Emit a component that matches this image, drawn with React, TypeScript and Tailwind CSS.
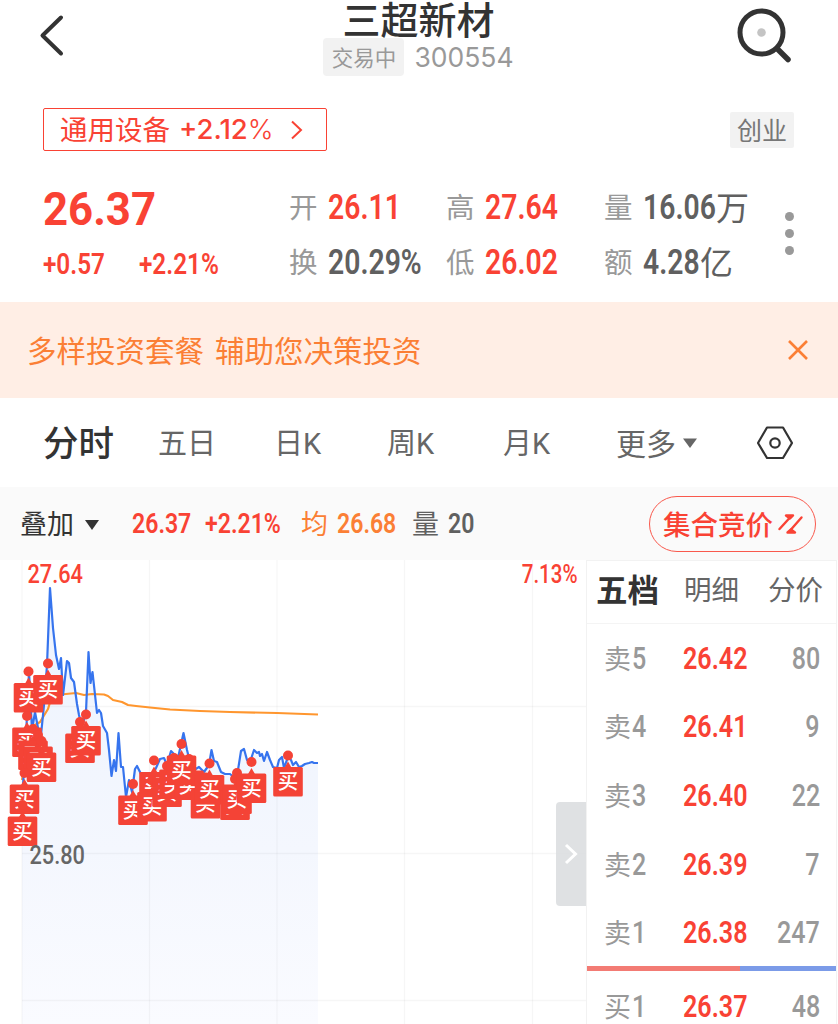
import clsx from 'clsx';
import { twMerge } from 'tailwind-merge';

const PRICE_LINE =
  '22,800 24,770 27,716 29,672 32,730 35,712 38,728 41,735 44,705 47,665 50,588 53,628 56,655 59,669 61,658 63,695 67,661 69,663 71,678 74,682 77,704 79,715 82,727 86,712 88.5,652 90.5,683 92.5,672 97,713 99,710 101,713 103,726 107,733 109,750 111.5,776 114,760 116,771 118.5,733 121,767 123,767 126,797 129,780 132,792 135,769 137,766 140,772 146,784 152,776 156,768 160,759 164,758 167,765 171,751 174,754 178,758 183.5,733 187,750 190,762 194,770 199,767 204,772 209,765 211.5,750 214,761 217,762 221,772 225,774 230,774 235,778 238,770 241,751 244,749 247,760 250,762 254,750 257,753 259,752 260,756 262,754 264,761 267,752 270,760 273,767 277,768 279,760 282,757 284,768 288,757 291,760 293,765 296,762 299,767 302,766 305,764 309,763 312,762 314,763 318,763';

const AVG_LINE =
  '22,780 30,728 40,722 48,709 51,699 57,695 66,694 76,693 84,695 92,694 104,694.5 108,696 113,700 122,702 128,705 136,706 150,707.5 170,709.5 200,711 230,712 277,713 318,714.5';

// trade markers, painted in order so later ones sit on top
const buys = [
  [28.5, 671.5],
  [48, 663.5],
  [27, 716],
  [33, 729],
  [38, 735],
  [41.5, 741],
  [24.5, 773],
  [22.5, 805],
  [80, 722],
  [86, 714.5],
  [133, 784],
  [154, 760.5],
  [152, 780.5],
  [167, 766],
  [174, 758],
  [189, 759],
  [181.5, 744],
  [205.5, 777.5],
  [209.5, 763.5],
  [235, 779],
  [237, 773],
  [251.5, 762],
  [288, 755.5],
];

const tabs = [
  { label: '五日', width: 'w-[116px]' },
  { label: '日K', width: 'w-[113px]' },
  { label: '周K', width: 'w-[116px]' },
  { label: '月K', width: 'w-[112px]' },
];

const asks = [
  { label: '5', price: '26.42', qty: '80' },
  { label: '4', price: '26.41', qty: '9' },
  { label: '3', price: '26.40', qty: '22' },
  { label: '2', price: '26.39', qty: '7' },
  { label: '1', price: '26.38', qty: '247' },
];

// condensed figures: the glyphs are squeezed, the box width comes from className
function Num({ children, className, right }: { children: string; className?: string; right?: boolean }) {
  return (
    <span className={twMerge('flex shrink-0 whitespace-nowrap font-semibold', right && 'justify-end', className)}>
      <span className={clsx('block scale-x-[0.81]', right ? 'origin-right' : 'origin-left')}>{children}</span>
    </span>
  );
}

function Quote({ label, value, unit, width, dark }: { label: string; value: string; unit?: string; width: string; dark?: boolean }) {
  return (
    <div className="flex h-[55px] items-center">
      <span className="w-[39px] pt-[3px] text-[28.5px] text-[#999]">{label}</span>
      <Num className={clsx('text-[35px]', width, dark ? 'text-[#606060]' : 'text-[#f94234]')}>{value}</Num>
      {unit && <span className="pt-[2px] text-[33px] text-[#606060]">{unit}</span>}
    </div>
  );
}

function BookRow({ side, label, price, qty }: { side: string; label: string; price: string; qty: string }) {
  return (
    <div className="flex h-[68.6px] items-center pl-[17px] pr-[16px] text-[31px]">
      <span className="w-[28px] pt-[4px] text-[27px] text-[#999]">{side}</span>
      <Num className="w-[51px] font-medium text-[#999]">{label}</Num>
      <Num className="w-[66px] text-[#f94234]">{price}</Num>
      <Num right className="ml-auto font-medium text-[#999]">{qty}</Num>
    </div>
  );
}

function Chart() {
  return (
    <svg className="block h-[464px] w-[586px]" viewBox="0 560 586 464">
      <defs>
        <linearGradient id="area" x1="0" y1="0" x2="0" y2="1">
          <stop offset="0" stopColor="#edf3fe" />
          <stop offset="0.6" stopColor="#f4f7fe" />
          <stop offset="1" stopColor="#fafbff" />
        </linearGradient>
      </defs>
      <polygon points={`22,1024 ${PRICE_LINE} 318,1024`} fill="url(#area)" />
      <g stroke="#000" strokeOpacity="0.035" strokeWidth="1.3">
        {[22, 149.5, 277, 404.5, 532.5].map((x) => (
          <line key={x} x1={x} x2={x} y1="560" y2="1024" />
        ))}
        {[706.5, 853.5, 1000.5].map((y) => (
          <line key={y} x1="22" x2="586" y1={y} y2={y} />
        ))}
      </g>
      <polyline points={AVG_LINE} fill="none" stroke="#ff962e" strokeWidth="2.2" strokeLinejoin="round" />
      <polyline points={PRICE_LINE} fill="none" stroke="#3674ee" strokeWidth="2.2" strokeLinejoin="round" />
      {buys.map(([x, y], i) => (
        <g key={i} transform={`translate(${x} ${y})`}>
          <circle r="5" fill="#f44336" />
          <path d="M0 6 L4 13 H-4Z" fill="#f44336" />
          <rect x="-14.8" y="11.5" width="29.6" height="29.4" rx="1.5" fill="#f44336" />
          <text y="33.5" textAnchor="middle" fontSize="20.5" fill="#fff" className="font-medium">
            买
          </text>
        </g>
      ))}
      <g fontSize="25" className="font-medium">
        <text transform="translate(27.5 582.5) scale(.87 1)" fill="#f94234">27.64</text>
        <text transform="translate(577.5 582.5) scale(.82 1)" textAnchor="end" fill="#f94234">7.13%</text>
        <text transform="translate(29.5 863.5) scale(.87 1)" fill="#666">25.80</text>
      </g>
    </svg>
  );
}

export default function App() {
  return (
    <div className="h-[1024px] w-[838px] overflow-hidden bg-white font-['Roboto','Noto_Sans_CJK_SC',sans-serif] leading-none text-[#333]">
      <header className="flex h-[108px] items-start justify-between pl-[38px] pr-[44px]">
        <svg className="mt-[13px] h-[46px] w-[65px]" viewBox="0 0 65 46" fill="none" stroke="#333" strokeWidth="4" strokeLinecap="round" strokeLinejoin="round">
          <path d="M23 4.500 L4.500 22.500 L23 40.500" />
        </svg>
        <div className="flex flex-col items-center">
          <h1 className="h-[38px] text-[38px] font-medium leading-[42px]">三超新材</h1>
          <div className="flex h-[38px] items-center gap-[10px]">
            <span className="flex h-[38px] w-[81px] items-center justify-center rounded-[4px] bg-[#f2f2f2] pt-[3px] text-[21.500px] text-[#999]">交易中</span>
            <span className="font-['Inter'] text-[26.500px] text-[#999]">300554</span>
          </div>
        </div>
        <svg className="mt-[6px] h-[60px] w-[60px]" viewBox="0 0 60 60" fill="none" stroke="#333" strokeLinecap="round">
          <circle cx="27.500" cy="26.500" r="21.500" strokeWidth="5" />
          <path d="M43.500 43 L54 53.500" strokeWidth="5.500" />
          <circle cx="27.500" cy="26.500" r="4.300" fill="#c4c4c4" stroke="none" />
        </svg>
      </header>

      <div className="flex h-[43px] items-center justify-between pl-[43px] pr-[44px]">
        <div className="flex h-[43px] w-[284px] items-center rounded-[2px] border-[1.5px] border-[#f94234] pl-[16px] text-[#f94234]">
          <span className="pt-[3px] text-[27.500px]">通用设备</span>
          <span className="ml-[9px] w-[97px] pt-px font-['Inter'] text-[27.500px] font-medium">+2.12<span className="font-light">%</span></span>
          <svg className="ml-[14px] h-[20px] w-[14px]" viewBox="0 0 14 20" fill="none" stroke="#f94234" strokeWidth="2">
            <path d="M2 1.500 L11 10 L2 18.500" />
          </svg>
        </div>
        <span className="flex h-[36px] w-[64px] items-center justify-center rounded-[2px] bg-[#f2f2f2] pt-[3px] text-[25px] text-[#777]">创业</span>
      </div>

      <section className="flex h-[151px] pl-[43px] pt-[29px]">
        <div className="w-[246px] text-[#f94234]">
          <div className="flex h-[57px] items-center text-[46px] font-bold">
            <span className="origin-left scale-x-[0.95]">26.37</span>
          </div>
          <div className="flex h-[53px] items-center text-[30px]">
            <Num className="w-[96px]">+0.57</Num>
            <Num>+2.21%</Num>
          </div>
        </div>
        <div className="w-[157px]">
          <Quote label="开" value="26.11" width="w-[74px]" />
          <Quote label="换" value="20.29%" width="w-[92px]" dark />
        </div>
        <div className="w-[158px]">
          <Quote label="高" value="27.64" width="w-[74px]" />
          <Quote label="低" value="26.02" width="w-[74px]" />
        </div>
        <div className="w-[181px]">
          <Quote label="量" value="16.06" width="w-[73px]" unit="万" dark />
          <Quote label="额" value="4.28" width="w-[57px]" unit="亿" dark />
        </div>
        <div className="flex flex-col gap-[8px] pt-[32px]">
          <i className="size-[9px] rounded-full bg-[#999]" />
          <i className="size-[9px] rounded-full bg-[#999]" />
          <i className="size-[9px] rounded-full bg-[#999]" />
        </div>
      </section>

      <div className="flex h-[96px] items-center justify-between bg-[#ffeee5] pl-[27px] pr-[29px] text-[29.500px] text-[#fb7f35]">
        <span className="flex gap-[11px] pt-[5px]">
          <span>多样投资套餐</span>
          <span>辅助您决策投资</span>
        </span>
        <svg className="size-[22px]" viewBox="0 0 22 22" stroke="#fb7f35" strokeWidth="2.600">
          <path d="M2 2 L20 20 M20 2 L2 20" />
        </svg>
      </div>

      <nav className="flex h-[89px] items-center pl-[43px] text-[29px] text-[#666]">
        <span className="w-[115px] pt-[4px] text-[35.500px] font-medium text-[#333]">分时</span>
        {tabs.map((tab) => (
          <span key={tab.label} className={clsx('pt-[4px]', tab.width)}>{tab.label}</span>
        ))}
        <span className="flex w-[141px] items-center gap-[6px] pl-[1px] text-[30px]">
          <span className="pt-[4px]">更多</span>
          <svg className="h-[12px] w-[16px]" viewBox="0 0 16 12" fill="#666">
            <path d="M1 1.500 H15 L8 11Z" />
          </svg>
        </span>
        <svg className="h-[36px] w-[38px]" viewBox="0 0 38 36" fill="none" stroke="#333" strokeWidth="2.200" strokeLinejoin="round">
          <path d="M11 2.500 H27 L36 18 L27 33 H11 L2 18Z" />
          <circle cx="19" cy="18" r="4.700" />
        </svg>
      </nav>

      <div className="flex h-[73px] items-center bg-[#fafafa] pl-[20px] pr-[22px] text-[28.500px]">
        <span className="w-[64px] pt-[4px] text-[27px]">叠加</span>
        <svg className="mr-[32px] mt-[3px] h-[12px] w-[16px]" viewBox="0 0 16 12" fill="#333">
          <path d="M1 1 H15 L8 11Z" />
        </svg>
        <Num className="w-[73px] pt-[2px] text-[#f94234]">26.37</Num>
        <Num className="w-[96px] pt-[2px] text-[#f94234]">+2.21%</Num>
        <span className="w-[36px] pt-[4px] text-[27px] text-[#fb7f35]">均</span>
        <Num className="w-[75px] pt-[2px] text-[#fb7f35]">26.68</Num>
        <span className="w-[36px] pt-[4px] text-[27px] text-[#606060]">量</span>
        <Num className="pt-[2px] text-[#606060]">20</Num>
        <button className="ml-auto flex h-[56px] w-[167px] items-center rounded-full border-[1.5px] border-[#f9594d] pl-[13px] text-[27.500px] font-medium text-[#f94234]">
          <span className="pt-[4px]">集合竞价</span>
          <svg className="ml-[5px] h-[22px] w-[26px]" viewBox="0 0 26 22" fill="#f94234" stroke="#f94234" strokeWidth="2.400" strokeLinecap="round" strokeLinejoin="round">
            <path d="M1.500 16 L12 4.500" />
            <path d="M8 2.500 H15 L12 5.500Z" />
            <path d="M23.500 4.500 L13 16.500" />
            <path d="M17 19.500 H9.500 L13 16.500Z" />
          </svg>
        </button>
      </div>

      <main className="flex h-[464px]">
        <div className="relative w-[586px]">
          <Chart />
          <div className="absolute right-0 top-[242px] flex h-[104px] w-[30px] items-center justify-center rounded-l-[4px] bg-[#dcdee0]/90">
            <svg className="h-[22px] w-[16px]" viewBox="0 0 16 22" fill="none" stroke="#fff" strokeWidth="3">
              <path d="M3 2 L12.500 11 L3 20" />
            </svg>
          </div>
        </div>
        <aside className="w-[251px] border-x border-t border-[#f2f2f2]">
          <div className="flex h-[63px] items-center border-b border-[#f4f4f4] pb-[2px] pl-[9px] text-[27.500px] text-[#666]">
            <span className="w-[88px] pt-[2px] text-[31.500px] font-bold text-[#333]">五档</span>
            <span className="w-[84px]">明细</span>
            <span>分价</span>
          </div>
          {asks.map((row) => (
            <BookRow key={row.label} side="卖" {...row} />
          ))}
          <div className="-mt-px mb-px flex h-[5px]">
            <div className="w-[153px] bg-[#f37b74]" />
            <div className="flex-1 bg-[#7b9be8]" />
          </div>
          <BookRow side="买" label="1" price="26.37" qty="48" />
        </aside>
      </main>
    </div>
  );
}
